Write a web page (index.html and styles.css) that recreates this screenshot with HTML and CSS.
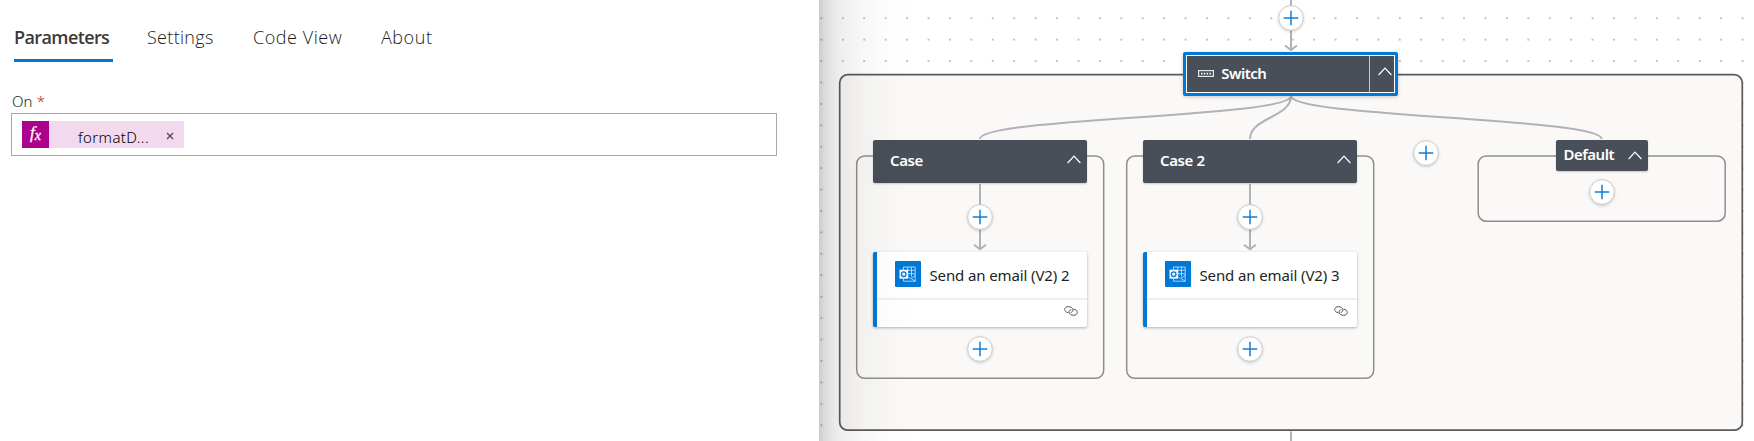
FILE: index.html
```html
<!DOCTYPE html>
<html lang="en">
<head>
<meta charset="utf-8">
<title>Workflow designer</title>
<link rel="stylesheet" href="styles.css">
</head>
<body>
<svg class="defs" width="0" height="0">
  <symbol id="plus" viewBox="0 0 26 26"><circle cx="13" cy="13" r="12.3" fill="#fff" stroke="#cfcdcb" stroke-width="1"/><path d="M13 5.700v14.600M5.700 13h14.600" stroke="#0f7fd8" stroke-width="1.500" fill="none"/></symbol>
  <symbol id="chev" viewBox="0 0 14 9"><path d="M.6 8 7 1.200 13.400 8" stroke="#fff" stroke-width="1.200" fill="none"/></symbol>
  <symbol id="link" viewBox="0 0 14 10"><g fill="none" stroke="#55535c" stroke-width="1"><path d="M4.300 6.700C2.200 6.500.6 5 .7 3.400.8 1.600 2.300.7 4.300.7c2.400 0 4.700 1.300 4.700 3.200 0 1.400-1 2.300-2.400 2.600"/><path d="M9.600 3.200c2.100.2 3.800 1.600 3.700 3.300-.1 1.800-1.700 2.800-3.600 2.800C7.300 9.300 5 8 5 6.100c0-1.300.9-2.200 2.300-2.500"/></g></symbol>
  <symbol id="mail" viewBox="0 0 26 26"><rect width="26" height="26" rx="1" fill="#0078d4"/><g fill="none" stroke="#d4e9fa" stroke-width=".8"><path d="M8.500 9V6h11.700v9M8.500 17.500v2.700h11.700v-5.700l-4.500 3.200-3-2M12.800 6v9M16.500 6v9.500M12 9.300h8M12 12.700h8M16.200 17.500l4 2.700"/></g><rect x="4.500" y="8.700" width="8.500" height="9" fill="#f5faff"/><circle cx="8.700" cy="13.200" r="2.300" fill="none" stroke="#0078d4" stroke-width="1.300"/></symbol>
</svg>
<div class="app">
  <section class="panel">
    <nav class="tabs">
      <span class="tab tab-active">Parameters</span>
      <span class="tab tab-settings">Settings</span>
      <span class="tab tab-code">Code View</span>
      <span class="tab tab-about">About</span>
    </nav>
    <div class="label">On <span class="required">*</span></div>
    <div class="field">
      <div class="token"><span class="fx">f<small>x</small></span><span class="token-text">formatD...</span><svg class="close" viewBox="0 0 8 8"><path d="M1 1l6 6M7 1 1 7" stroke="#4c434b" stroke-width="1.200"/></svg></div>
    </div>
  </section>
  <main class="canvas">
    <svg class="edges" viewBox="819 0 935 441">
      <g fill="#faf9f8" stroke="#8f8e8d" stroke-width="1.500">
        <rect x="839.700" y="74.700" width="902.600" height="355.500" rx="8" stroke="#5b5a59" stroke-width="1.700"/>
        <rect x="856.700" y="156" width="247" height="222.300" rx="8"/>
        <rect x="1126.700" y="156" width="247" height="222.300" rx="8"/>
        <rect x="1478.200" y="156" width="247" height="65.200" rx="8"/>
      </g>
      <g fill="none" stroke="#b1b1b7" stroke-width="2">
        <path d="M1291 0V50M1285 45.500l6 4.500 6-4.500M1291 431.500V441"/>
        <path d="M1291 96C1291 117.500 980 117.500 980 139M1291 96C1291 117.500 1250 117.500 1250 139M1291 96C1291 117.500 1601.700 117.500 1601.700 139"/>
        <path d="M980 184V249M974 244.800l6 4.500 6-4.500M1250 184V249M1244 244.800l6 4.500 6-4.500"/>
      </g>
    </svg>
    <div class="switch">
      <div class="switch-main"><svg class="switch-icon" viewBox="0 0 16 7"><rect x=".6" y=".6" width="14.800" height="5.800" fill="none" stroke="#e6e7e9" stroke-width="1.200"/><path d="M3 3.700h10.500" stroke="#fff" stroke-width="1.700" stroke-dasharray="1.500 1.300"/></svg><span>Switch</span></div>
      <div class="switch-toggle"><svg class="chev"><use href="#chev"/></svg></div>
    </div>
    <div class="head case-head one"><span>Case</span><svg class="chev"><use href="#chev"/></svg></div>
    <div class="head case-head two"><span>Case 2</span><svg class="chev"><use href="#chev"/></svg></div>
    <div class="head default-head"><span>Default</span><svg class="chev"><use href="#chev"/></svg></div>
    <article class="card one"><div class="card-title"><svg class="mail"><use href="#mail"/></svg><span>Send an email (V2) 2</span></div><div class="card-foot"><svg class="link"><use href="#link"/></svg></div></article>
    <article class="card two"><div class="card-title"><svg class="mail"><use href="#mail"/></svg><span>Send an email (V2) 3</span></div><div class="card-foot"><svg class="link"><use href="#link"/></svg></div></article>
    <svg class="plus p-top"><use href="#plus"/></svg>
    <svg class="plus p-in one"><use href="#plus"/></svg>
    <svg class="plus p-in two"><use href="#plus"/></svg>
    <svg class="plus p-end one"><use href="#plus"/></svg>
    <svg class="plus p-end two"><use href="#plus"/></svg>
    <svg class="plus p-case"><use href="#plus"/></svg>
    <svg class="plus p-default"><use href="#plus"/></svg>
    <div class="shade"></div>
  </main>
</div>
</body>
</html>
```
FILE: styles.css
```css
* { box-sizing: border-box; }
body { margin: 0; background: #fff; font-family: "Noto Sans", "Open Sans", sans-serif; color: #323130; }
svg { display: block; flex: none; }
.defs { position: absolute; }
.app { display: flex; width: 1754px; height: 441px; overflow: hidden; }
.panel { width: 819px; flex: none; padding: 14px 42px 0 11px; }
.tabs { display: flex; height: 48px; padding-left: 3px; font-size: 18px; color: #1c1b1a; font-family: "Open Sans", sans-serif; white-space: nowrap; }
.tab { height: 48px; line-height: 46px; font-weight: 300; }
.tab-active { width: 99px; border-bottom: 3px solid #0078d4; font-weight: 600; color: #3b3a39; letter-spacing: -.6px; }
.tab-settings { margin-left: 34px; width: 106px; letter-spacing: .3px; }
.tab-code { width: 128px; letter-spacing: .55px; }
.tab-about { letter-spacing: .55px; }
.label { margin-top: 28px; height: 23px; line-height: 23px; padding-left: 1px; font-size: 15px; font-weight: 300; color: #1c1b1a; letter-spacing: .1px; }
.required { color: #b8282c; }
.field { height: 43px; border: 1px solid #a8a8a8; padding: 7px 10px; }
.token { display: flex; align-items: center; width: 162px; height: 27px; background: #f2d9ee; }
.fx { width: 27px; height: 27px; background: #ad008c; color: #fff; font: italic 17px/24px "Liberation Serif", serif; text-align: center; -webkit-text-stroke: .3px #fff; }
.fx small { font-size: 14px; position: relative; top: 2px; }
.token-text { width: 88px; margin-left: 29px; padding-top: 5px; font-size: 15px; line-height: 22px; font-weight: 300; color: #000; letter-spacing: .4px; }
.close { width: 8px; height: 8px; margin-top: 2px; }

/* Flow canvas: nodes sit at free coordinates */
.canvas { position: relative; flex: 1; height: 441px; overflow: hidden; background: radial-gradient(circle at 50% 50%, #888 0, #aaa .6px, transparent .9px) -8.300px 7.500px / 21.430px 21.430px #fff; }
.edges, .switch, .head, .card, .plus, .shade { position: absolute; }
.edges { left: 0; top: 0; width: 935px; height: 441px; }
.head { display: flex; align-items: center; justify-content: space-between; background: #484f58; color: #fff; font-size: 15px; font-weight: 600; border-radius: 2px; box-shadow: 0 1px 2px #0003; }
.case-head { top: 140px; width: 214px; height: 43px; padding: 0 6px 0 17px; letter-spacing: -.4px; }
.case-head span { padding-bottom: 4px; }
.case-head.one, .card.one { left: 54px; }
.case-head.two, .card.two { left: 324px; }
.default-head { left: 736.500px; top: 140px; width: 92.500px; height: 30.500px; padding: 0 6px 0 8px; letter-spacing: -.5px; }
.default-head span { padding-bottom: 2px; }
.chev { width: 14px; height: 9px; }
.case-head .chev { margin-bottom: 4px; }
.default-head .chev { margin-top: 1px; }
.switch { display: flex; left: 364.300px; top: 52px; width: 214.700px; height: 43.500px; padding: 1px; background: #484f58; border: 3px solid #0078d4; border-radius: 2px; box-shadow: inset 0 0 0 1px #fff, 0 1px 4px #0003; color: #fff; }
.switch-main { display: flex; align-items: center; gap: 7px; flex: 1; padding-left: 11px; font-size: 15px; font-weight: 600; letter-spacing: -.5px; }
.switch-main span { padding-bottom: 2px; }
.switch-icon { width: 16px; height: 7px; }
.switch-toggle { display: flex; width: 25px; align-items: center; justify-content: center; border-left: 1px solid #c4c6c9; padding: 0 0 5px 6px; }
.card { top: 252px; width: 214px; height: 75px; background: #fff; border-left: 4px solid #0078d4; border-radius: 2px; box-shadow: 0 1px 3px #0000004d; color: #201f1e; }
.card-title { display: flex; align-items: center; height: 48px; border-bottom: 2px solid #f0efee; padding: 0 0 2px 18px; font-size: 15px; letter-spacing: -.12px; white-space: nowrap; }
.card-title span { padding: 1px 0 0 8.500px; }
.mail { width: 26px; height: 26px; }
.card-foot { display: flex; justify-content: flex-end; padding: 6px 9px 0 0; }
.link { width: 14px; height: 10px; }
.plus { width: 26px; height: 26px; overflow: visible; filter: drop-shadow(0 1px 1.500px #0003); }
.p-top { left: 459px; top: 5px; }
.p-in { top: 204.300px; }
.p-end { top: 336.300px; }
.plus.one { left: 148px; }
.plus.two { left: 418px; }
.p-case { left: 593.700px; top: 140px; }
.p-default { left: 770px; top: 178.700px; }
.shade { left: 0; top: 0; width: 95px; height: 441px; background: linear-gradient(90deg, #00000033, #00000026 5px, #0000001c 11px, #00000011 20px, #00000009 40px, #00000003 65px, transparent); }
```
